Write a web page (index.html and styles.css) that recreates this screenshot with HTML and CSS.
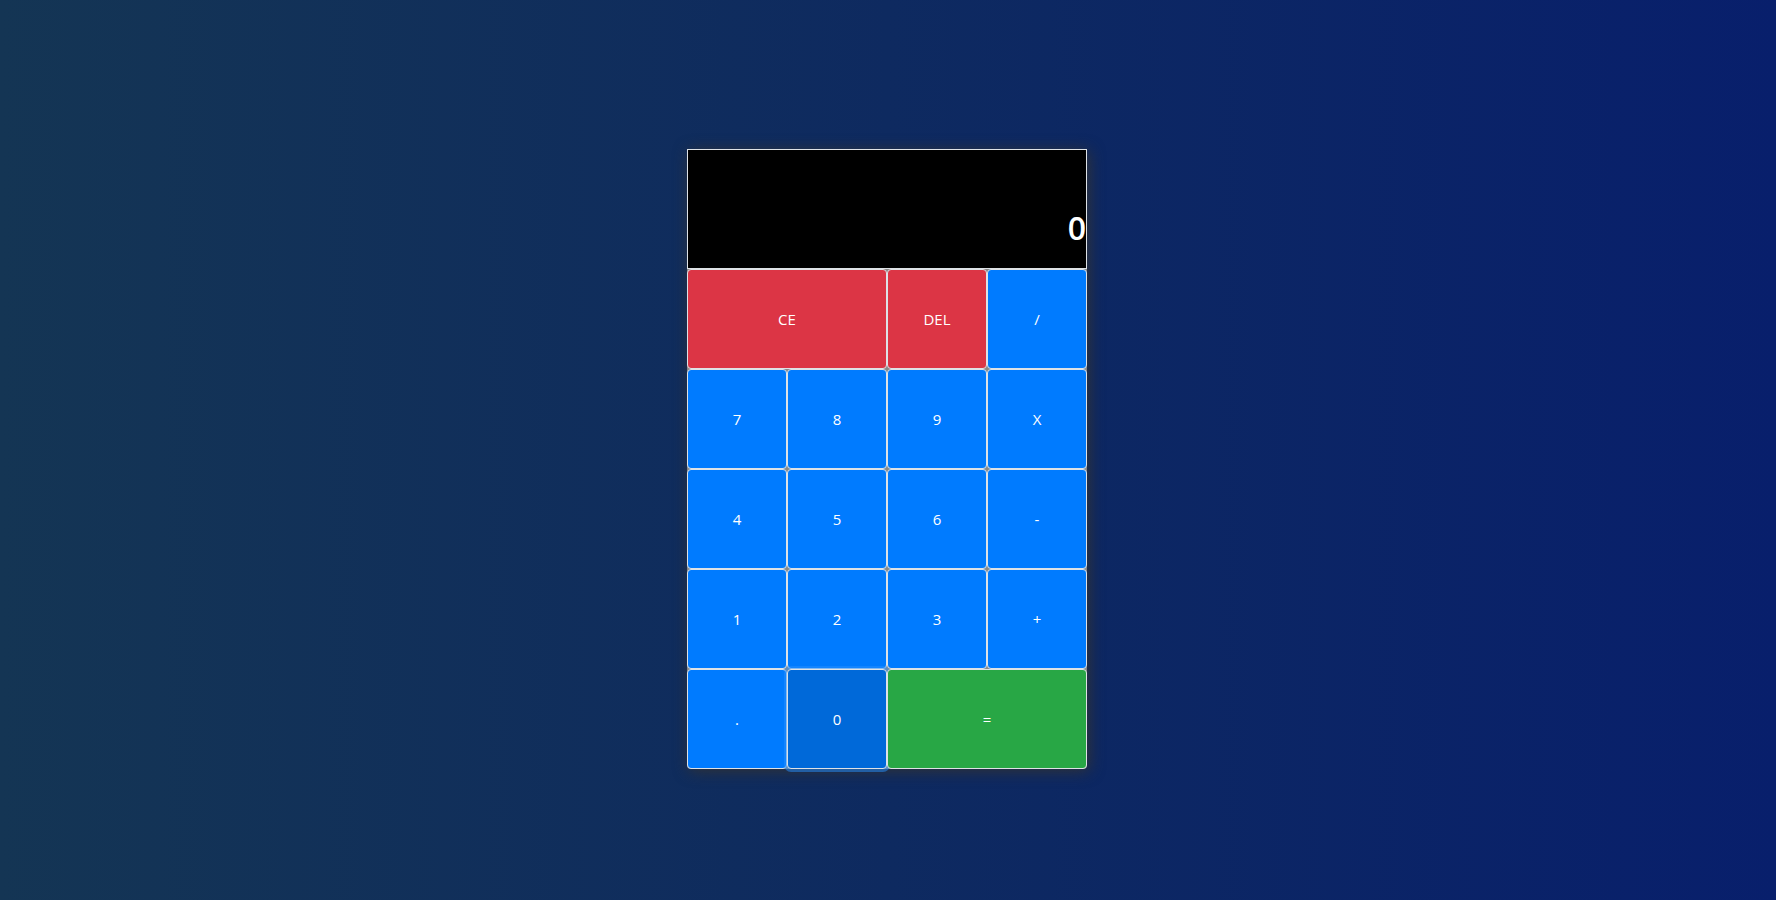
FILE: index.html
```html
<!DOCTYPE html>
<html lang="en">
<head>
<meta charset="utf-8">
<meta name="viewport" content="width=device-width, initial-scale=1">
<title>Calculator</title>
<link rel="stylesheet" href="styles.css">
</head>
<body>
<main class="calculator">
  <output class="display" aria-label="Result">0</output>
  <div class="keys">
    <button type="button" class="key danger wide">CE</button>
    <button type="button" class="key danger">DEL</button>
    <button type="button" class="key">/</button>
    <button type="button" class="key">7</button>
    <button type="button" class="key">8</button>
    <button type="button" class="key">9</button>
    <button type="button" class="key">X</button>
    <button type="button" class="key">4</button>
    <button type="button" class="key">5</button>
    <button type="button" class="key">6</button>
    <button type="button" class="key">-</button>
    <button type="button" class="key">1</button>
    <button type="button" class="key">2</button>
    <button type="button" class="key">3</button>
    <button type="button" class="key">+</button>
    <button type="button" class="key">.</button>
    <button type="button" class="key active">0</button>
    <button type="button" class="key success wide">=</button>
  </div>
</main>
</body>
</html>
```
FILE: styles.css
```css
* {
  box-sizing: border-box;
}

body {
  margin: 0;
  min-height: 100vh;
  padding: 18px 2px 0 0;
  display: grid;
  place-items: center;
  background: linear-gradient(to right, #143554, #081f6c);
  font-family: "Open Sans", "Noto Sans", sans-serif;
  color: #fff;
}

.calculator {
  width: 100%;
  max-width: 400px;
  border-radius: 0 0 4px 4px;
  background: #888;
  box-shadow: 2px 2px 15px #333;
}

.display {
  display: flex;
  align-items: flex-end;
  justify-content: flex-end;
  height: 120px;
  padding-bottom: 21px;
  border: 1px solid #dee2e6;
  background: #000;
  font-size: 32px;
  font-weight: 600;
  line-height: 38px;
}

.keys {
  display: grid;
  grid-template-columns: repeat(4, 1fr);
  grid-auto-rows: 100px;
}

.key {
  border: 1px solid #dee2e6;
  border-radius: 4px;
  padding: 6px 12px;
  background: #007bff;
  color: #fff;
  font: inherit;
  font-size: 15px;
  line-height: 24px;
}

.wide {
  grid-column: span 2;
}

.danger {
  background: #dc3545;
}

.success {
  background: #28a745;
}

.active {
  background: #0069d9;
  box-shadow: 0 0 0 3px rgba(38, 143, 255, 0.5);
}
```
